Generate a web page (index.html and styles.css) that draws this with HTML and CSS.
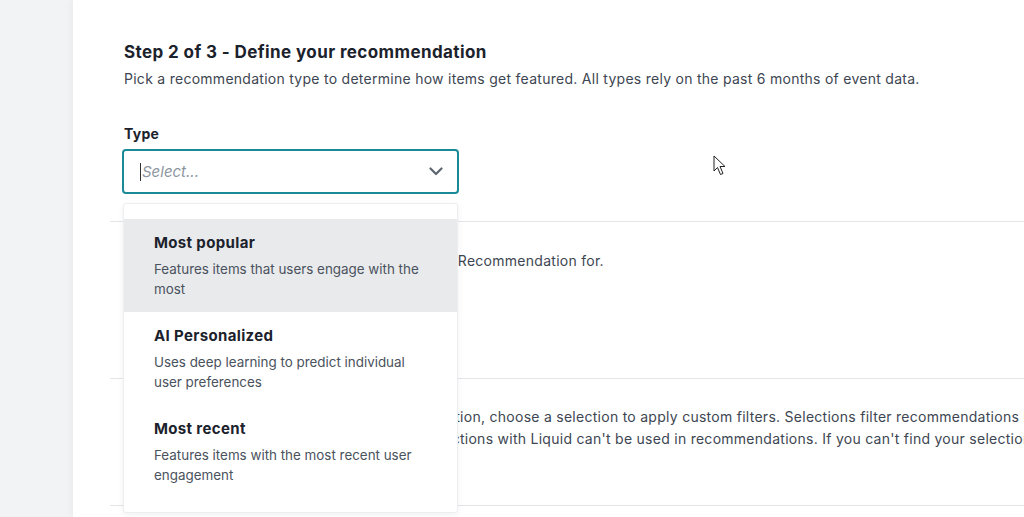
FILE: index.html
```html
<!DOCTYPE html>
<html>
<head>
<meta charset="utf-8">
<link rel="stylesheet" href="styles.css">
</head>
<body>
<div class="sidebar"></div>
<main class="main">
  <section class="section first">
    <h2 class="title">Step 2 of 3 - Define your recommendation</h2>
    <p class="lead">Pick a recommendation type to determine how items get featured. All types rely on the past 6 months of event data.</p>
    <label class="label">Type</label>
    <div class="select-wrap">
      <div class="select">
        <span class="caret"></span><span class="placeholder">Select...</span>
        <svg class="chev" width="14" height="9" viewBox="0 0 14 9"><path d="M1.5 1.5 L7 7 L12.5 1.5" fill="none" stroke="#5d6671" stroke-width="2.2" stroke-linecap="round" stroke-linejoin="round"/></svg>
      </div>
      <ul class="menu">
        <li class="option active">
          <div class="opt-title">Most popular</div>
          <div class="opt-desc">Features items that users engage with the most</div>
        </li>
        <li class="option">
          <div class="opt-title">AI Personalized</div>
          <div class="opt-desc">Uses deep learning to predict individual user preferences</div>
        </li>
        <li class="option">
          <div class="opt-title">Most recent</div>
          <div class="opt-desc">Features items with the most recent user engagement</div>
        </li>
      </ul>
    </div>
  </section>
  <section class="section second">
    <p class="text">Choose the catalog that you want to use for this Recommendation for.</p>
  </section>
  <section class="section third">
    <p class="text wide">Optionally, after you have picked a recommendation, choose a selection to apply custom filters. Selections filter recommendations by specific columns in your catalog.</p>
    <p class="text wide">All items must match every filter you enter. Selections with Liquid can't be used in recommendations. If you can't find your selection, make sure it is set up in your catalog.</p>
  </section>
  <svg class="pointer" width="14" height="22" viewBox="0 0 14 22"><path d="M1 1 L1 16 L4.5 12.5 L7.5 19.5 L10 18.5 L7 11.5 L12 11.5 Z" fill="#fff" stroke="#222" stroke-width="1" stroke-linejoin="round"/></svg>
</main>
</body>
</html>
```
FILE: styles.css
```css
html, body {
  margin: 0;
  padding: 0;
  height: 517px;
  overflow: hidden;
}
body {
  display: flex;
  font-family: Inter, "Liberation Sans", sans-serif;
  color: #1f2733;
  background: #fff;
}
.sidebar {
  width: 73px;
  flex: none;
  background: #f2f3f5;
}
.main {
  flex: 1;
  position: relative;
  background: #fff;
  padding-left: 37px;
  box-shadow: -3px 0 5px rgba(0, 0, 0, 0.03);
  min-width: 0;
}
.section {
  padding: 0 14px;
  border-bottom: 1px solid #e3e5e8;
}
.first {
  padding-top: 40px;
  padding-bottom: 27px;
}
.title {
  margin: 0;
  font-size: 17px;
  line-height: 24px;
  font-weight: 700;
  color: #1b222c;
  letter-spacing: 0.4px;
}
.lead {
  margin: 5px 0 0;
  font-size: 14px;
  line-height: 20px;
  color: #3d4652;
  letter-spacing: 0.27px;
}
.label {
  display: block;
  margin-top: 35px;
  font-size: 14px;
  line-height: 20px;
  font-weight: 700;
  color: #1b222c;
  letter-spacing: 0.3px;
}
.select-wrap {
  position: relative;
  margin-top: 5px;
  width: 337px;
  margin-left: -2px;
}
.select {
  box-sizing: border-box;
  height: 45px;
  border: 2px solid #1a8b96;
  border-radius: 4px;
  display: flex;
  align-items: center;
  padding: 0 14px 0 16px;
}
.caret {
  width: 1px;
  height: 18px;
  background: #333;
  margin-right: 1px;
}
.placeholder {
  flex: 1;
  font-style: italic;
  font-size: 15px;
  color: #8d96a0;
}
.chev {
  display: block;
}
.menu {
  position: absolute;
  top: calc(100% + 9px);
  left: 1px;
  width: 335px;
  box-sizing: border-box;
  margin: 0;
  padding: 15px 0 14px;
  list-style: none;
  background: #fff;
  border: 1px solid #eceef0;
  border-radius: 3px;
  box-shadow: 0 2px 6px rgba(0, 0, 0, 0.06);
  z-index: 5;
}
.option {
  padding: 13px 30px 13px 30px;
}
.option.active {
  background: #e9eaec;
}
.opt-title {
  font-size: 15px;
  line-height: 22px;
  font-weight: 700;
  color: #1b222c;
  letter-spacing: 0.35px;
}
.opt-desc {
  margin-top: 5px;
  font-size: 13.4px;
  line-height: 20px;
  color: #4a525d;
}
.text {
  margin: 0;
  font-size: 14px;
  line-height: 20px;
  color: #3d4652;
  letter-spacing: 0.27px;
}
.second {
  padding-top: 29px;
  padding-bottom: 107px;
}
.third {
  padding-top: 27px;
  padding-bottom: 55px;
}
.wide {
  white-space: nowrap;
  line-height: 22px;
}
.pointer {
  position: absolute;
  left: 640px;
  top: 155px;
}
```
